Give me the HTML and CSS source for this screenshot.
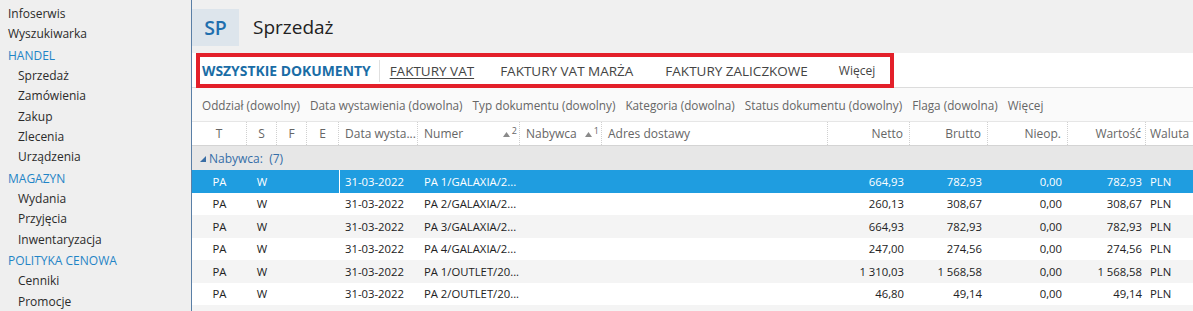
FILE: index.html
```html
<!DOCTYPE html>
<html lang="pl">
<head>
<meta charset="utf-8">
<title>Sprzedaż</title>
<link rel="stylesheet" href="styles.css">
</head>
<body>
<div class="app">
  <nav class="sidebar">
    <div class="nav-item">Infoserwis</div>
    <div class="nav-item">Wyszukiwarka</div>
    <div class="nav-head">HANDEL</div>
    <div class="nav-item sub">Sprzedaż</div>
    <div class="nav-item sub">Zamówienia</div>
    <div class="nav-item sub">Zakup</div>
    <div class="nav-item sub">Zlecenia</div>
    <div class="nav-item sub">Urządzenia</div>
    <div class="nav-head">MAGAZYN</div>
    <div class="nav-item sub">Wydania</div>
    <div class="nav-item sub">Przyjęcia</div>
    <div class="nav-item sub">Inwentaryzacja</div>
    <div class="nav-head">POLITYKA CENOWA</div>
    <div class="nav-item sub">Cenniki</div>
    <div class="nav-item sub">Promocje</div>
  </nav>
  <main class="main">
    <header class="topbar">
      <div class="badge">SP</div>
      <h1 class="title">Sprzedaż</h1>
    </header>
    <div class="tabbar">
      <div class="tabs-box">
        <span class="tab active">WSZYSTKIE DOKUMENTY</span>
        <span class="tab underline">FAKTURY VAT</span>
        <span class="tab marza">FAKTURY VAT MARŻA</span>
        <span class="tab zal">FAKTURY ZALICZKOWE</span>
        <span class="tab more">Więcej</span>
      </div>
    </div>
    <div class="filters">
      <span>Oddział (dowolny)</span>
      <span>Data wystawienia (dowolna)</span>
      <span>Typ dokumentu (dowolny)</span>
      <span>Kategoria (dowolna)</span>
      <span>Status dokumentu (dowolny)</span>
      <span>Flaga (dowolna)</span>
      <span>Więcej</span>
    </div>
    <div class="grid">
      <div class="row head">
        <div class="c c-t">T</div>
        <div class="c c-s">S</div>
        <div class="c c-f">F</div>
        <div class="c c-e">E</div>
        <div class="c c-data">Data wysta...</div>
        <div class="c c-num sortable">Numer<span class="sort"><svg width="7" height="5" viewBox="0 0 7 5"><path d="M0 5 L3.5 0 L7 5 Z" fill="#8a8a8a"/></svg><sup>2</sup></span></div>
        <div class="c c-nab sortable">Nabywca<span class="sort"><svg width="7" height="5" viewBox="0 0 7 5"><path d="M0 5 L3.5 0 L7 5 Z" fill="#8a8a8a"/></svg><sup>1</sup></span></div>
        <div class="c c-adr">Adres dostawy</div>
        <div class="c c-netto">Netto</div>
        <div class="c c-brutto">Brutto</div>
        <div class="c c-nieop">Nieop.</div>
        <div class="c c-wart">Wartość</div>
        <div class="c c-wal">Waluta</div>
      </div>
      <div class="group"><svg class="tri" width="6" height="6" viewBox="0 0 6 6"><path d="M6 0 L6 6 L0 6 Z" fill="#3a6ea5"/></svg>Nabywca:&nbsp; (7)</div>
      <div class="row sel">
        <div class="c c-t">PA</div><div class="c c-s">W</div><div class="c c-f"></div><div class="c c-e"></div>
        <div class="c c-data">31-03-2022</div><div class="c c-num">PA 1/GALAXIA/2...</div><div class="c c-nab"></div><div class="c c-adr"></div>
        <div class="c c-netto">664,93</div><div class="c c-brutto">782,93</div><div class="c c-nieop">0,00</div><div class="c c-wart">782,93</div><div class="c c-wal">PLN</div>
      </div>
      <div class="row">
        <div class="c c-t">PA</div><div class="c c-s">W</div><div class="c c-f"></div><div class="c c-e"></div>
        <div class="c c-data">31-03-2022</div><div class="c c-num">PA 2/GALAXIA/2...</div><div class="c c-nab"></div><div class="c c-adr"></div>
        <div class="c c-netto">260,13</div><div class="c c-brutto">308,67</div><div class="c c-nieop">0,00</div><div class="c c-wart">308,67</div><div class="c c-wal">PLN</div>
      </div>
      <div class="row alt">
        <div class="c c-t">PA</div><div class="c c-s">W</div><div class="c c-f"></div><div class="c c-e"></div>
        <div class="c c-data">31-03-2022</div><div class="c c-num">PA 3/GALAXIA/2...</div><div class="c c-nab"></div><div class="c c-adr"></div>
        <div class="c c-netto">664,93</div><div class="c c-brutto">782,93</div><div class="c c-nieop">0,00</div><div class="c c-wart">782,93</div><div class="c c-wal">PLN</div>
      </div>
      <div class="row">
        <div class="c c-t">PA</div><div class="c c-s">W</div><div class="c c-f"></div><div class="c c-e"></div>
        <div class="c c-data">31-03-2022</div><div class="c c-num">PA 4/GALAXIA/2...</div><div class="c c-nab"></div><div class="c c-adr"></div>
        <div class="c c-netto">247,00</div><div class="c c-brutto">274,56</div><div class="c c-nieop">0,00</div><div class="c c-wart">274,56</div><div class="c c-wal">PLN</div>
      </div>
      <div class="row alt">
        <div class="c c-t">PA</div><div class="c c-s">W</div><div class="c c-f"></div><div class="c c-e"></div>
        <div class="c c-data">31-03-2022</div><div class="c c-num">PA 1/OUTLET/20...</div><div class="c c-nab"></div><div class="c c-adr"></div>
        <div class="c c-netto">1 310,03</div><div class="c c-brutto">1 568,58</div><div class="c c-nieop">0,00</div><div class="c c-wart">1 568,58</div><div class="c c-wal">PLN</div>
      </div>
      <div class="row">
        <div class="c c-t">PA</div><div class="c c-s">W</div><div class="c c-f"></div><div class="c c-e"></div>
        <div class="c c-data">31-03-2022</div><div class="c c-num">PA 2/OUTLET/20...</div><div class="c c-nab"></div><div class="c c-adr"></div>
        <div class="c c-netto">46,80</div><div class="c c-brutto">49,14</div><div class="c c-nieop">0,00</div><div class="c c-wart">49,14</div><div class="c c-wal">PLN</div>
      </div>
      <div class="row alt">
        <div class="c c-t"></div><div class="c c-s"></div><div class="c c-f"></div><div class="c c-e"></div>
        <div class="c c-data"></div><div class="c c-num"></div><div class="c c-nab"></div><div class="c c-adr"></div>
        <div class="c c-netto"></div><div class="c c-brutto"></div><div class="c c-nieop"></div><div class="c c-wart"></div><div class="c c-wal"></div>
      </div>
    </div>
  </main>
</div>
</body>
</html>
```

FILE: styles.css
```css
* { box-sizing: border-box; }
html, body { margin: 0; padding: 0; }
body {
  width: 1193px;
  height: 311px;
  overflow: hidden;
  font-family: "Open Sans", "Noto Sans", sans-serif;
  color: #222;
  background: #fff;
}
.app { display: flex; height: 311px; overflow: hidden; }

.sidebar {
  width: 192px;
  flex: none;
  background: #efefef;
  border-right: 1px solid #5a7fa6;
  padding-top: 4px;
  font-size: 12px;
  line-height: 20.3px;
}
.nav-item { padding-left: 8px; color: #2b2b2b; white-space: nowrap; }
.nav-item.sub { padding-left: 18px; }
.nav-head { padding-left: 8px; color: #1f84c6; line-height: 21.5px; }

.main { flex: 1; min-width: 0; display: flex; flex-direction: column; overflow: hidden; }
.main > * { flex: none; }

.topbar {
  height: 53px;
  background: #f0f0f0;
  display: flex;
  align-items: flex-start;
  padding-top: 9px;
}
.badge {
  width: 47px;
  height: 37px;
  background: #dde5ec;
  color: #1f6fae;
  font-size: 19.5px;
  font-weight: 600;
  display: flex;
  align-items: center;
  justify-content: center;
}
.title {
  margin: 0 0 0 14px;
  font-size: 19px;
  font-weight: 400;
  line-height: 37px;
  color: #222;
}

.tabbar {
  height: 35px;
  background: #fff;
  display: flex;
  border-bottom: 1px solid #dcdcdc;
}
.tabs-box {
  margin-left: 4px;
  width: 698px;
  height: 35px;
  border: 4px solid #e3202a;
  display: flex;
  align-items: center;
  font-size: 13.5px;
  color: #444;
  padding-left: 2px;
}
.tab { white-space: nowrap; padding: 0 13px; line-height: 22px; }
.tab.active {
  color: #1a6da6;
  font-weight: 700;
  font-size: 13.9px;
  padding-left: 0;
  padding-right: 8px;
  border-right: 1px solid #e0e0e0;
}
.tab.underline { text-decoration: underline; text-decoration-thickness: 1px; text-underline-offset: 2px; padding-left: 10px; }
.tab.marza { padding-right: 16px; }
.tab.zal { padding-left: 16px; padding-right: 15px; }
.tab.more { font-size: 12px; padding-left: 16px; }

.filters {
  height: 34px;
  background: #fafafa;
  display: flex;
  align-items: center;
  gap: 10px;
  padding-left: 10px;
  font-size: 11.75px;
  color: #666;
  white-space: nowrap;
  border-bottom: 1px solid #e6e6e6;
}

.grid { font-size: 11.3px; }
.row {
  display: grid;
  grid-template-columns: 55px 30px 30px 32px 79px 102px 82px 226px 82px 78px 80px 78px 47px;
  height: 22.5px;
  align-items: center;
  color: #222;
}
.row.head {
  height: 24px;
  align-items: stretch;
  color: #666;
  font-size: 12px;
  border-bottom: 1px solid #d4d4d4;
  background: #fff;
}
.row.head .c { border-right: 1px dotted #d0d0d0; display: flex; align-items: center; }
.row.head .c-wal { border-right: none; }
.c { white-space: nowrap; overflow: hidden; padding: 0 6px; }
.c-t, .c-s, .c-f, .c-e { text-align: center; padding: 0; }
.row.head .c-t, .row.head .c-s, .row.head .c-f, .row.head .c-e { justify-content: center; }
.c-netto, .c-brutto, .c-nieop { text-align: right; }
.c-wart { text-align: right; padding-right: 4px; }
.row.head .c-netto, .row.head .c-brutto, .row.head .c-nieop, .row.head .c-wart { justify-content: flex-end; }
.c-wal { padding-left: 4px; }
.row.head .sortable { justify-content: space-between; padding-right: 2px; }
.sort { display: inline-flex; align-items: center; gap: 2px; }
.sort svg { margin-top: 2px; }
.sort sup { font-size: 9px; line-height: 1; vertical-align: top; margin-top: -6px; color: #666; }

.group {
  height: 24px;
  background: #e7e7e7;
  display: flex;
  align-items: center;
  padding-left: 8px;
  color: #356ea8;
  font-size: 12px;
}
.group .tri { margin-right: 3px; margin-top: 1px; }

.row.sel { background: #1f9de0; color: #fff; }
.row.sel .c-data { border-left: 1px solid #fff; height: 100%; display: flex; align-items: center; padding-left: 5px; }
.row.alt { background: #f4f4f4; }
```
